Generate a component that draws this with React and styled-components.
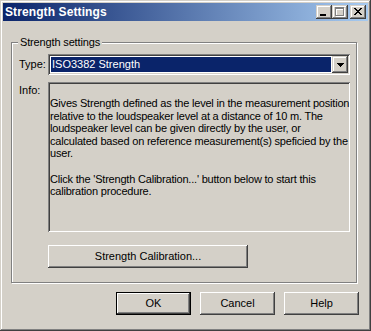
import styled, { createGlobalStyle } from "styled-components";

const GlobalStyle = createGlobalStyle`
  html, body {
    margin: 0;
    padding: 0;
    background: #d4d0c8;
  }
  body {
    font-family: "Liberation Sans", Arial, sans-serif;
    font-size: 11px;
    color: #000;
  }
`;

const Window = styled.div`
  width: 371px;
  height: 331px;
  box-sizing: border-box;
  padding: 3px;
  background: #d4d0c8;
  box-shadow: inset -1px -1px #404040, inset 1px 1px #d4d0c8,
    inset -2px -2px #808080, inset 2px 2px #ffffff;
  display: flex;
  flex-direction: column;
`;

const TitleBar = styled.div`
  height: 18px;
  display: flex;
  align-items: center;
  padding: 0 2px;
  background: linear-gradient(to right, #0a246a, #a6caf0);
`;

const TitleText = styled.div`
  flex: 1;
  color: #fff;
  font-weight: bold;
  font-size: 12px;
  letter-spacing: 0.1px;
  white-space: nowrap;
`;

const CaptionButtons = styled.div`
  display: flex;
  gap: 2px;
`;

const CaptionPair = styled.div`
  display: flex;
`;

const CaptionButton = styled.div`
  width: 16px;
  height: 14px;
  box-sizing: border-box;
  background: #d4d0c8;
  box-shadow: inset -1px -1px #404040, inset 1px 1px #d4d0c8,
    inset -2px -2px #808080, inset 2px 2px #ffffff;
  display: flex;
  svg {
    display: block;
  }
`;

const Body = styled.div`
  flex: 1;
  display: flex;
  flex-direction: column;
  padding: 21px 0 0 8px;
`;

const Group = styled.div`
  position: relative;
  width: 346px;
  height: 241px;
  box-sizing: border-box;
  border: 1px solid #808080;
  box-shadow: inset 1px 1px #ffffff, 1px 1px #ffffff;
  padding: 11px 6px 0 7px;
  display: flex;
  flex-direction: column;
  gap: 7px;
`;

const GroupLabel = styled.div`
  position: absolute;
  top: -7px;
  left: 6px;
  padding: 0 2px 0 2px;
  background: #d4d0c8;
  line-height: 13px;
  letter-spacing: -0.15px;
`;

const FieldRow = styled.div`
  display: flex;
  align-items: ${(p) => (p.$top ? "flex-start" : "center")};
  margin-top: ${(p) => p.$gap || 0}px;
`;

const FieldLabel = styled.div`
  width: 29px;
  flex: none;
  padding-top: ${(p) => p.$offset || 0}px;
  line-height: 13px;
`;

const sunken = `
  box-shadow: inset 1px 1px #808080, inset -1px -1px #ffffff,
    inset 2px 2px #404040, inset -2px -2px #d4d0c8;
`;

const Combo = styled.div`
  width: 302px;
  height: 21px;
  box-sizing: border-box;
  padding: 2px;
  background: #fff;
  ${sunken}
  display: flex;
`;

const ComboValue = styled.div`
  flex: 1;
  margin: 1px;
  background: #0a246a;
  color: #fff;
  padding-left: 1px;
  line-height: 15px;
  white-space: nowrap;
`;

const ComboArrow = styled.div`
  width: 16px;
  height: 17px;
  box-sizing: border-box;
  background: #d4d0c8;
  box-shadow: inset -1px -1px #404040, inset 1px 1px #d4d0c8,
    inset -2px -2px #808080, inset 2px 2px #ffffff;
  display: flex;
  align-items: center;
  justify-content: center;
  svg {
    display: block;
  }
`;

const InfoBox = styled.div`
  width: 302px;
  height: 150px;
  box-sizing: border-box;
  padding: 15px 2px 0 2px;
  background: #d4d0c8;
  ${sunken}
  line-height: 12.6px;
  letter-spacing: -0.2px;
  white-space: nowrap;
`;

const PushButton = styled.div`
  width: ${(p) => p.$w || 75}px;
  height: 23px;
  box-sizing: border-box;
  background: #d4d0c8;
  display: flex;
  align-items: center;
  justify-content: center;
  white-space: nowrap;
  padding-bottom: 1px;
  border: ${(p) => (p.$default ? "1px solid #000" : "none")};
  box-shadow: inset -1px -1px #404040, inset 1px 1px #ffffff,
    inset -2px -2px #808080, inset 2px 2px #d4d0c8;
`;

const CalibrationRow = styled.div`
  display: flex;
  margin-top: 6px;
  padding-left: 29px;
`;

const ButtonBar = styled.div`
  display: flex;
  justify-content: flex-end;
  gap: 9px;
  margin-top: 9px;
  padding-right: 9px;
`;

const px = (cells) =>
  cells.map(([x, y, w = 1, h = 1], i) => (
    <rect key={i} x={x} y={y} width={w} height={h} />
  ));

const MinimizeIcon = () => (
  <svg width="16" height="14" shapeRendering="crispEdges">
    <g fill="#000">{px([[4, 9, 6, 2]])}</g>
  </svg>
);

const MaximizeIcon = () => (
  <svg width="16" height="14" shapeRendering="crispEdges">
    <g fill="#fff">
      {px([
        [4, 3, 9, 2],
        [4, 3, 1, 9],
        [12, 3, 1, 9],
        [4, 11, 9, 1],
      ])}
    </g>
    <g fill="#808080">
      {px([
        [3, 2, 9, 2],
        [3, 2, 1, 9],
        [11, 2, 1, 9],
        [3, 10, 9, 1],
      ])}
    </g>
  </svg>
);

const CloseIcon = () => (
  <svg width="16" height="14" shapeRendering="crispEdges">
    <g fill="#000">
      {px([
        [4, 3, 2, 1],
        [10, 3, 2, 1],
        [5, 4, 2, 1],
        [9, 4, 2, 1],
        [6, 5, 4, 1],
        [7, 6, 2, 1],
        [6, 7, 4, 1],
        [5, 8, 2, 1],
        [9, 8, 2, 1],
        [4, 9, 2, 1],
        [10, 9, 2, 1],
      ])}
    </g>
  </svg>
);

const ArrowIcon = () => (
  <svg width="7" height="4" shapeRendering="crispEdges">
    <g fill="#000">
      {px([
        [0, 0, 7, 1],
        [1, 1, 5, 1],
        [2, 2, 3, 1],
        [3, 3, 1, 1],
      ])}
    </g>
  </svg>
);

export default function App() {
  return (
    <>
      <GlobalStyle />
      <Window>
        <TitleBar>
          <TitleText>Strength Settings</TitleText>
          <CaptionButtons>
            <CaptionPair>
              <CaptionButton>
                <MinimizeIcon />
              </CaptionButton>
              <CaptionButton>
                <MaximizeIcon />
              </CaptionButton>
            </CaptionPair>
            <CaptionButton>
              <CloseIcon />
            </CaptionButton>
          </CaptionButtons>
        </TitleBar>
        <Body>
          <Group>
            <GroupLabel>Strength settings</GroupLabel>
            <FieldRow>
              <FieldLabel>Type:</FieldLabel>
              <Combo>
                <ComboValue>ISO3382 Strength</ComboValue>
                <ComboArrow>
                  <ArrowIcon />
                </ComboArrow>
              </Combo>
            </FieldRow>
            <FieldRow $top>
              <FieldLabel $offset={2}>Info:</FieldLabel>
              <InfoBox>
                Gives Strength defined as the level in the measurement position
                <br />
                relative to the loudspeaker level at a distance of 10 m. The
                <br />
                loudspeaker level can be given directly by the user, or
                <br />
                calculated based on reference measurement(s) speficied by the
                <br />
                user.
                <br />
                <br />
                Click the 'Strength Calibration...' button below to start this
                <br />
                calibration procedure.
              </InfoBox>
            </FieldRow>
            <CalibrationRow>
              <PushButton $w={200}>Strength Calibration...</PushButton>
            </CalibrationRow>
          </Group>
          <ButtonBar>
            <PushButton $default>OK</PushButton>
            <PushButton>Cancel</PushButton>
            <PushButton>Help</PushButton>
          </ButtonBar>
        </Body>
      </Window>
    </>
  );
}
